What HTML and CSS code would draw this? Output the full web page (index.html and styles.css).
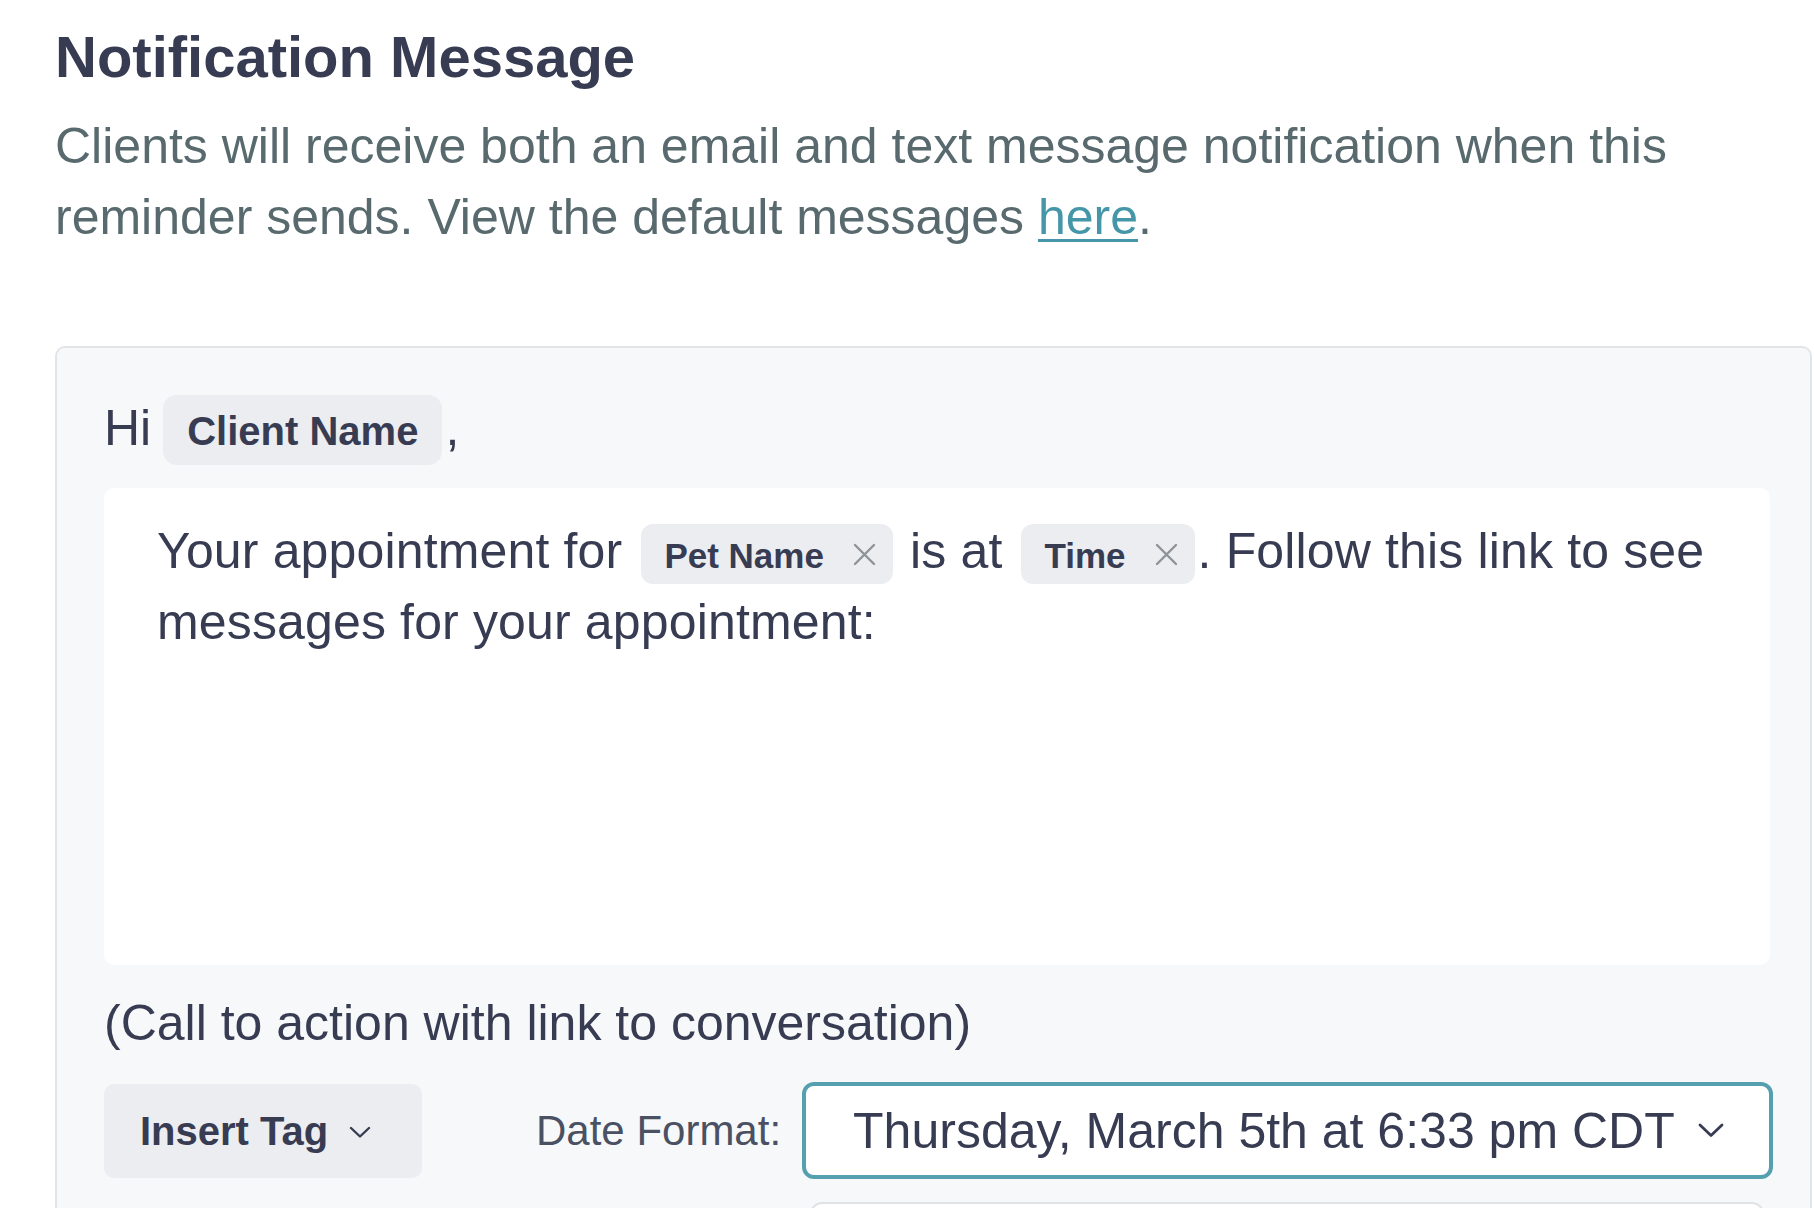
FILE: index.html
```html
<!DOCTYPE html>
<html lang="en">
<head>
<meta charset="utf-8">
<title>Notification Message</title>
<link rel="stylesheet" href="styles.css">
</head>
<body>
<div class="page">
  <h1 class="title">Notification Message</h1>
  <p class="lede"><span class="run">Clients will receive both an email and text message notification when this </span><span class="run">reminder sends. View the default messages </span><a class="link" href="#">here</a><span class="run">.</span></p>

  <div class="box">
    <div class="greet">
      <span>Hi</span>
      <span class="chip-lg">Client Name</span>
      <span class="comma">,</span>
    </div>

    <div class="editor"><span class="run">Your appointment for </span><span class="tag"><span class="tag-text">Pet Name</span><svg class="x" width="23" height="23" viewBox="0 0 23 23"><path d="M2 2L21 21M21 2L2 21" fill="none" stroke="#8d929b" stroke-width="2.4" stroke-linecap="round"/></svg></span><span class="run"> is at </span><span class="tag"><span class="tag-text">Time</span><svg class="x" width="23" height="23" viewBox="0 0 23 23"><path d="M2 2L21 21M21 2L2 21" fill="none" stroke="#8d929b" stroke-width="2.4" stroke-linecap="round"/></svg></span><span class="run">. Follow this link to see </span><span class="run">messages for your appointment:</span></div>

    <div class="cta">(Call to action with link to conversation)</div>

    <div class="controls">
      <button class="insert-btn" type="button"><span>Insert Tag</span><svg width="22" height="12" viewBox="0 0 22 12"><path d="M2 2L11 10.5L20 2" fill="none" stroke="#383c53" stroke-width="2.4" stroke-linecap="round" stroke-linejoin="round"/></svg></button>
      <span class="label">Date Format:</span>
      <div class="select"><span>Thursday, March 5th at 6:33 pm CDT</span><svg width="26" height="15" viewBox="0 0 26 15"><path d="M2 2L13 12.5L24 2" fill="none" stroke="#383c53" stroke-width="2.8" stroke-linecap="round" stroke-linejoin="round"/></svg></div>
    </div>

    <div class="next-field"></div>
  </div>
</div>
</body>
</html>
```

FILE: styles.css
```css
html, body {
  margin: 0;
  padding: 0;
  background: #ffffff;
}

.page {
  padding: 22px 2px 0 55px;
  font-family: "Liberation Sans", Arial, sans-serif;
  color: #383c53;
}

.title {
  margin: 0;
  font-size: 58px;
  line-height: 70px;
  font-weight: 700;
  color: #383c53;
}

.lede {
  margin: 19px 0 0;
  font-size: 50px;
  line-height: 71px;
  color: #596a6e;
}

.link {
  color: #4596a8;
  text-decoration: underline;
  text-decoration-thickness: 3px;
  text-underline-offset: 5px;
}

.box {
  margin-top: 93px;
  border: 2px solid #e2e5e8;
  border-radius: 10px;
  background: #f7f8fa;
  padding: 47px 40px 60px 47px;
}

.greet {
  display: flex;
  align-items: baseline;
  font-size: 50px;
  line-height: 60px;
  color: #383c53;
}

.chip-lg {
  margin-left: 12px;
  padding: 13px 24px 11px;
  font-size: 40px;
  line-height: 46px;
  font-weight: 700;
  background: #ecedf0;
  border-radius: 14px;
}

.comma {
  margin-left: 3px;
}

.editor {
  margin-top: 23px;
  height: 477px;
  box-sizing: border-box;
  padding: 28px 40px 28px 53px;
  background: #ffffff;
  border-radius: 10px;
  font-size: 50px;
  line-height: 71px;
  color: #383c53;
  letter-spacing: 0.15px;
}

.tag {
  display: inline-flex;
  align-items: center;
  gap: 29px;
  margin: 0 3px 0 5px;
  padding: 12px 17px 8px 23px;
  font-size: 35px;
  line-height: 40px;
  font-weight: 700;
  letter-spacing: 0;
  background: #ecedf0;
  border-radius: 12px;
  vertical-align: baseline;
}

.tag .x {
  margin-top: -4px;
  flex: none;
}

.cta {
  margin-top: 23px;
  font-size: 50px;
  line-height: 71px;
  color: #383c53;
}

.controls {
  margin-top: 23px;
  display: flex;
  align-items: center;
}

.insert-btn {
  display: flex;
  align-items: center;
  gap: 21px;
  width: 318px;
  height: 94px;
  box-sizing: border-box;
  padding: 0 45px 0 36px;
  border: 0;
  border-radius: 10px;
  background: #ecedf0;
  font-family: "Liberation Sans", Arial, sans-serif;
  font-size: 40px;
  line-height: 46px;
  font-weight: 700;
  color: #383c53;
}

.insert-btn svg {
  flex: none;
  margin-top: 2px;
}

.label {
  margin-left: 114px;
  font-size: 42px;
  line-height: 50px;
  color: #4a5163;
}

.select {
  flex: 1;
  margin-left: 21px;
  margin-right: -3px;
  height: 97px;
  box-sizing: border-box;
  display: flex;
  align-items: center;
  justify-content: space-between;
  padding: 0 45px 0 47px;
  border: 4px solid #55a0af;
  border-radius: 12px;
  background: #ffffff;
  font-size: 50px;
  line-height: 60px;
  color: #383c53;
}

.select svg {
  flex: none;
}

.next-field {
  margin: 23px 6px 0 706px;
  height: 97px;
  border: 2px solid #dfe2e6;
  border-radius: 12px;
  background: #ffffff;
}
```
